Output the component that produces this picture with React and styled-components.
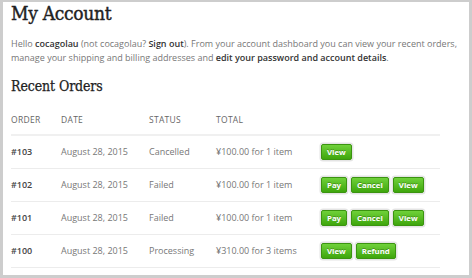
import React from "react";
import styled, { createGlobalStyle } from "styled-components";

const GlobalStyle = createGlobalStyle`
  html, body {
    margin: 0;
    padding: 0;
    background: #fff;
  }
`;

const Frame = styled.div`
  width: 472px;
  height: 278px;
  box-sizing: border-box;
  border: 3px solid #cdcdcd;
  border-top-width: 2px;
  background: #fff;
  padding: 0 0 0 8px;
  overflow: hidden;
  font-family: "Open Sans", "Liberation Sans", sans-serif;
  color: #777;
`;

const Title = styled.h1`
  font-family: "DejaVu Serif Condensed", "DejaVu Serif", serif;
  font-weight: 400;
  font-size: 19px;
  letter-spacing: -0.3px;
  -webkit-text-stroke: 0.4px #222;
  color: #222;
  margin: 0;
  line-height: 22px;
`;

const Intro = styled.p`
  font-size: 9px;
  line-height: 14px;
  margin: 13px 0 0;
  color: #777;

  strong {
    color: #333;
    font-weight: 600;
  }
`;

const Subtitle = styled.h2`
  font-family: "DejaVu Serif Condensed", "DejaVu Serif", serif;
  font-weight: 400;
  font-size: 14px;
  letter-spacing: -0.1px;
  -webkit-text-stroke: 0.25px #222;
  color: #222;
  margin: 12px 0 0;
  line-height: 18px;
`;

const Table = styled.table`
  width: 429px;
  border-collapse: collapse;
  table-layout: fixed;
  margin-top: 19px;
`;

const HeadCell = styled.th`
  text-align: left;
  font-weight: normal;
  text-transform: uppercase;
  font-size: 8.5px;
  line-height: 12px;
  letter-spacing: 0.3px;
  color: #666;
  height: 20px;
  padding: 0;
  vertical-align: top;
  border-bottom: 2px solid #f0f0f0;
  width: ${(p) => p.$w}px;
`;

const Row = styled.tr`
  height: 33px;
  border-bottom: 1px solid #ececec;
`;

const Cell = styled.td`
  padding: 0;
  font-size: 9px;
  color: ${(p) => (p.$strong ? "#444" : "#777")};
  font-weight: ${(p) => (p.$strong ? 600 : 400)};
  vertical-align: middle;
  white-space: nowrap;
`;

const Actions = styled.div`
  display: flex;
  gap: 4px;
`;

const Button = styled.span`
  display: inline-block;
  height: 14px;
  line-height: 14px;
  padding: 0 5px;
  font-size: 7.8px;
  font-weight: 700;
  color: #fff;
  text-shadow: 0 -1px 0 rgba(0, 0, 0, 0.25);
  background: linear-gradient(#6fd13a, #3ea60c);
  border: 1px solid #3b9410;
  border-radius: 2px;
  box-shadow: 0 0 0 1.5px #e4e4e4;
  margin: 2px 0;
`;

const orders = [
  { id: "#103", date: "August 28, 2015", status: "Cancelled", total: "¥100.00 for 1 item", actions: ["View"] },
  { id: "#102", date: "August 28, 2015", status: "Failed", total: "¥100.00 for 1 item", actions: ["Pay", "Cancel", "View"] },
  { id: "#101", date: "August 28, 2015", status: "Failed", total: "¥100.00 for 1 item", actions: ["Pay", "Cancel", "View"] },
  { id: "#100", date: "August 28, 2015", status: "Processing", total: "¥310.00 for 3 items", actions: ["View", "Refund"] },
];

const App = () => {
  return (
    <Frame>
      <GlobalStyle />
      <Title>My Account</Title>
      <Intro>
        Hello <strong>cocagolau</strong> (not cocagolau? <strong>Sign out</strong>). From your account
        dashboard you can view your recent orders, manage your shipping and billing addresses and{" "}
        <strong>edit your password and account details</strong>.
      </Intro>
      <Subtitle>Recent Orders</Subtitle>
      <Table>
        <thead>
          <tr>
            <HeadCell $w={50}>Order</HeadCell>
            <HeadCell $w={88}>Date</HeadCell>
            <HeadCell $w={67}>Status</HeadCell>
            <HeadCell $w={105}>Total</HeadCell>
            <HeadCell $w={119}></HeadCell>
          </tr>
        </thead>
        <tbody>
          {orders.map((o) => (
            <Row key={o.id}>
              <Cell $strong>{o.id}</Cell>
              <Cell>{o.date}</Cell>
              <Cell>{o.status}</Cell>
              <Cell>{o.total}</Cell>
              <Cell>
                <Actions>
                  {o.actions.map((a) => (
                    <Button key={a}>{a}</Button>
                  ))}
                </Actions>
              </Cell>
            </Row>
          ))}
        </tbody>
      </Table>
    </Frame>
  );
};

export default App;
